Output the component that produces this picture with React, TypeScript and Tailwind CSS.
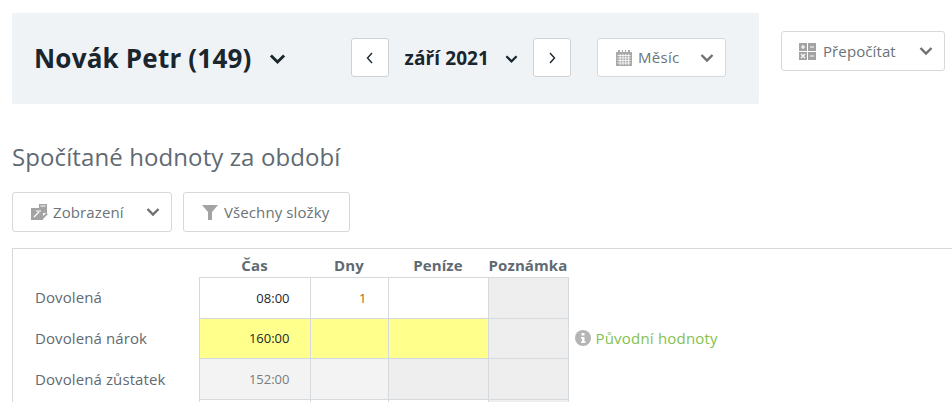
import type { ReactNode } from "react";

function Chevron({ className }: { className: string }) {
  return (
    <svg viewBox="0 0 14 10" className={className} fill="none" stroke="currentColor" strokeWidth="2.4">
      <path d="M1.5 2 L7 7.5 L12.5 2" />
    </svg>
  );
}

function CalendarIcon() {
  return (
    <svg viewBox="0 0 16 17" className="h-[17px] w-[16px] text-[#a9a9a9]" fill="currentColor">
      <path d="M2 1h2v2h2V1h1v2h2V1h1v2h2V1h2v2h2v14H0V3h2z" />
      <path
        d="M1.5 6.500h13M1.500 9h13M1.500 11.500h13M1.500 14h13M4.200 5v11M7 5v11M9.800 5v11M12.600 5v11"
        stroke="#fff"
        strokeWidth="0.8"
      />
    </svg>
  );
}

function CalcIcon() {
  return (
    <svg viewBox="0 0 17 17" className="h-[17px] w-[17px]" fill="#a3a3a3">
      <rect x="0" y="0" width="8" height="8" />
      <rect x="9" y="0" width="8" height="8" />
      <rect x="0" y="9" width="8" height="8" />
      <rect x="9" y="9" width="8" height="8" />
      <path d="M2 4h4M4 2v4M11 4h4M2 11l4 4M6 11l-4 4M11 13h4" stroke="#fff" strokeWidth="1.2" />
    </svg>
  );
}

function ViewIcon() {
  return (
    <svg viewBox="0 0 17 16" className="h-[16px] w-[17px]" fill="#a3a3a3">
      <path d="M8 0h8v9H8z" />
      <path d="M0 4h12v12H0z" />
      <path d="M9.500 2h5M5 7h5M3 13l5-5" stroke="#fff" strokeWidth="1.2" fill="none" />
      <path d="M9 15l6-6 2 1-6 6z" />
    </svg>
  );
}

function FilterIcon() {
  return (
    <svg viewBox="0 0 16 15" className="h-[15px] w-[16px]" fill="#a3a3a3">
      <path d="M0 0h16L10 7v8H6V7z" />
    </svg>
  );
}

function ToolButton({ children, className }: { children: ReactNode; className: string }) {
  return (
    <button className={`flex items-center rounded-[3px] border border-[#d5d9dc] bg-white text-[15px] tracking-[0.1px] text-[#6b7379] ${className}`}>
      {children}
    </button>
  );
}

function ArrowButton({ d }: { d: string }) {
  return (
    <button className="flex h-[39px] w-[38px] items-center justify-center rounded-[3px] border border-[#cfd2d5] bg-white text-[#1d262d]">
      <svg viewBox="0 0 8 12" className="h-[12px] w-[8px]" fill="none" stroke="currentColor" strokeWidth="1.4">
        <path d={d} />
      </svg>
    </button>
  );
}

const rows = [
  { label: "Dovolená", time: "08:00", days: "1", kind: "plain", height: "h-[41px]", labelPad: "" },
  { label: "Dovolená nárok", time: "160:00", days: "", kind: "edited", height: "h-[40px]", labelPad: "pt-[1px]" },
  { label: "Dovolená zůstatek", time: "152:00", days: "", kind: "total", height: "h-[41px]", labelPad: "pt-[1px]" },
];

const cell = "border border-[#d5dade] p-0";

export default function App() {
  return (
    <div className="h-[402px] w-[952px] overflow-hidden bg-white font-['Open_Sans',sans-serif] text-[#5f6a72]">
      {/* Top bar */}
      <div className="flex items-start pl-3 pt-[13px]">
        <div className="flex h-[91px] w-[747px] items-center rounded-[2px] bg-[#eff3f6] pb-[2px] pl-[22px] text-[#1a252d]">
          <h1 className="text-[26px] leading-[34px] font-bold tracking-[0.2px]">Novák Petr (149)</h1>
          <Chevron className="ml-[17px] mt-[2px] h-[12px] w-[17px]" />
          <div className="ml-[65px]">
            <ArrowButton d="M6 1 L1.5 6 L6 11" />
          </div>
          <span className="ml-[16px] text-[19px] leading-[24px] font-bold tracking-[0.1px]">září 2021</span>
          <Chevron className="ml-[16px] mt-[2px] h-[10px] w-[13px]" />
          <div className="ml-[15px]">
            <ArrowButton d="M2 1 L6.500 6 L2 11" />
          </div>
          <ToolButton className="ml-[26px] h-[39px] w-[129px] pl-[18px]">
            <CalendarIcon />
            <span className="ml-[6px] tracking-[0.3px]">Měsíc</span>
            <Chevron className="ml-[20px] h-[10px] w-[14px] text-[#6f6f6f]" />
          </ToolButton>
        </div>
        <ToolButton className="ml-[22px] mt-[18px] h-[40px] w-[164px] pl-[17px]">
          <CalcIcon />
          <span className="ml-[7px]">Přepočítat</span>
          <Chevron className="ml-[23px] h-[10px] w-[14px] text-[#6f6f6f]" />
        </ToolButton>
      </div>

      {/* Section */}
      <div className="pl-3">
        <h2 className="mt-[36px] text-[24px] leading-[33px] font-normal tracking-[0.1px] text-[#5f6a72]">Spočítané hodnoty za období</h2>
        <div className="mt-[19px] flex gap-[11px]">
          <ToolButton className="h-[40px] w-[160px] pl-[18px]">
            <ViewIcon />
            <span className="ml-[5px]">Zobrazení</span>
            <Chevron className="ml-[22px] h-[10px] w-[14px] text-[#6f6f6f]" />
          </ToolButton>
          <ToolButton className="h-[40px] w-[167px] pl-[18px]">
            <FilterIcon />
            <span className="ml-[6px]">Všechny složky</span>
          </ToolButton>
        </div>

        <div className="mt-[16px] w-[940px] border-l border-t border-[#d5d9dc]">
          <table className="table-fixed border-collapse">
            <colgroup>
              <col className="w-[186px]" />
              <col className="w-[111px]" />
              <col className="w-[78px]" />
              <col className="w-[100px]" />
              <col className="w-[80px]" />
              <col className="w-[300px]" />
            </colgroup>
            <thead>
              <tr className="h-[28px] text-[15px] font-bold tracking-[0.1px]">
                <th />
                <th className="p-0 pt-[5px] text-center font-bold">Čas</th>
                <th className="p-0 pt-[5px] text-center font-bold">Dny</th>
                <th className="p-0 pt-[5px] text-center font-bold">Peníze</th>
                <th className="p-0 pt-[5px] text-center font-bold">Poznámka</th>
                <th />
              </tr>
            </thead>
            <tbody>
              {rows.map((r) => {
                const bg =
                  r.kind === "edited" ? "bg-[#ffff8c]" : r.kind === "total" ? "bg-[#f3f3f3]" : "bg-white";
                const money = r.kind === "total" ? "bg-[#eeeeee]" : bg;
                return (
                  <tr key={r.label} className={r.height}>
                    <td className={`p-0 pl-[22px] text-[15px] tracking-[0.1px] ${r.labelPad}`}>{r.label}</td>
                    <td
                      className={`${cell} ${bg} pr-[20px] pt-[2px] text-right text-[13px] ${
                        r.kind === "total" ? "text-[#7b7b7b]" : "text-[#1d262d]"
                      }`}
                    >
                      {r.time}
                    </td>
                    <td className={`${cell} ${bg} pr-[21px] pt-[2px] text-right text-[13px] text-[#a8690f]`}>{r.days}</td>
                    <td className={`${cell} ${money}`} />
                    <td className={`${cell} bg-[#eeeeee]`} />
                    <td className="p-0 pl-[6px]">
                      {r.kind === "edited" && (
                        <div className="flex items-center text-[15px] tracking-[0.2px] text-[#84c14f]">
                          <svg viewBox="0 0 16 16" className="h-[16px] w-[16px]">
                            <circle cx="8" cy="8" r="8" fill="#b5b5b5" />
                            <path d="M6.500 3h3v2.500h-3zM6 7h3.500v4.500h1V13h-4.500v-1.500h1V8.500H6z" fill="#fff" />
                          </svg>
                          <span className="ml-[5px]">Původní hodnoty</span>
                        </div>
                      )}
                    </td>
                  </tr>
                );
              })}
              <tr className="h-[10px]">
                <td />
                <td className={`${cell} bg-white`} />
                <td className={`${cell} bg-white`} />
                <td className={`${cell} bg-white`} />
                <td className={`${cell} bg-[#eeeeee]`} />
                <td />
              </tr>
            </tbody>
          </table>
        </div>
      </div>
    </div>
  );
}
